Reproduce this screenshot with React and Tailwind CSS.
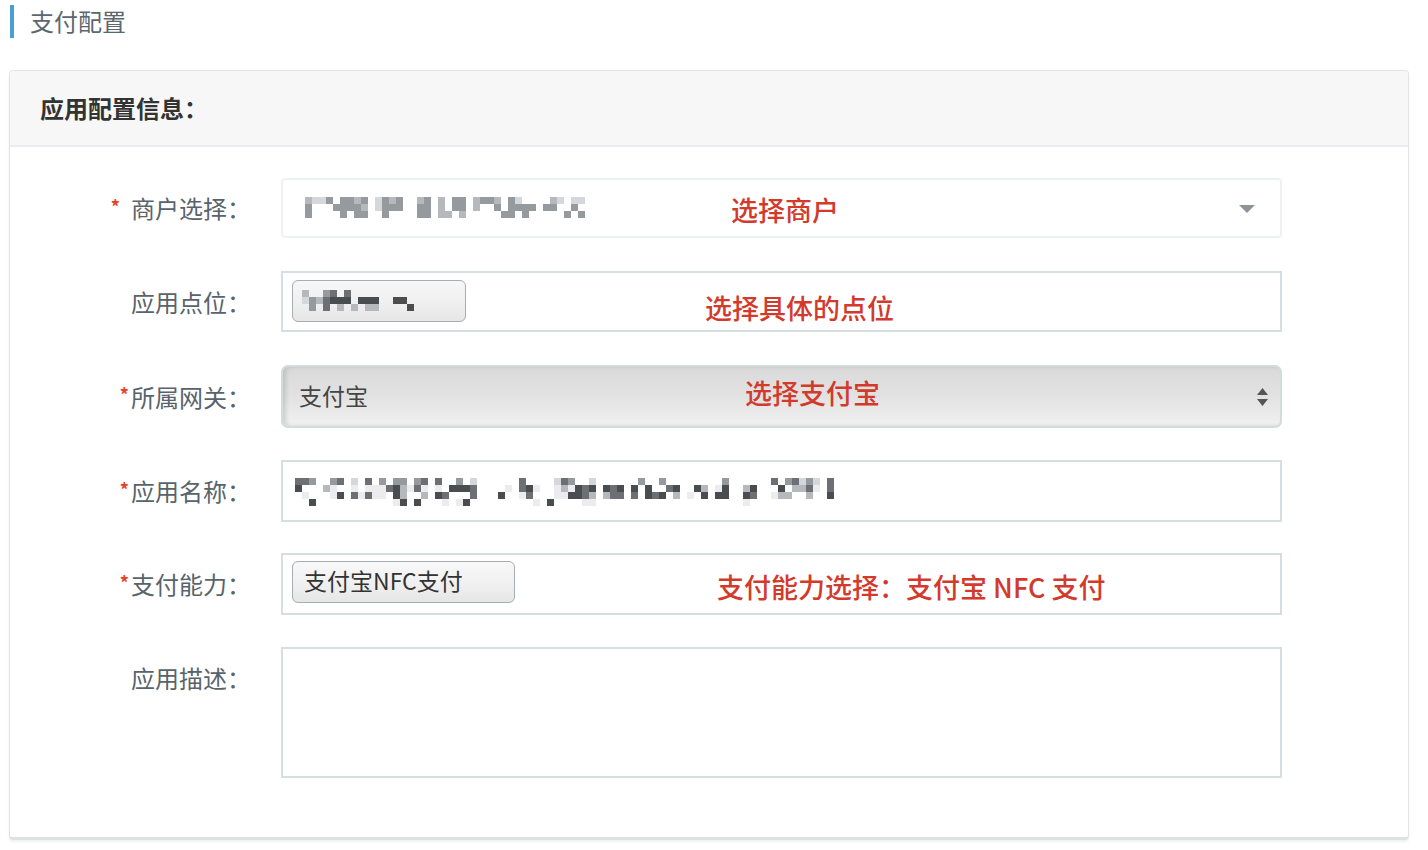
import React from 'react';

const PALETTE = {
  '1': '#ececee',
  '2': '#d5d8da',
  '3': '#b5b9bd',
  '4': '#959a9f',
  '5': '#6c7074',
  '6': '#4a4d50',
};

// pixelated (blurred) text, drawn as blocks
const Mosaic = ({ rows, size = 7 }) => {
  const cols = Math.max(...rows.map((r) => r.length));
  return (
    <svg width={cols * size} height={rows.length * size} className="block shrink-0">
      {rows.map((row, y) =>
        row.split('').map((c, x) =>
          PALETTE[c] ? (
            <rect key={`${x}-${y}`} x={x * size} y={y * size} width={size} height={size} fill={PALETTE[c]} />
          ) : null
        )
      )}
    </svg>
  );
};

// deterministic fake mosaic for the long app name
const makeRows = (cols, seed) => {
  let s = seed;
  const rnd = () => {
    s = (s * 9301 + 49297) % 233280;
    return s / 233280;
  };
  const rows = ['', '', '', ''];
  for (let x = 0; x < cols; x++) {
    const gap = x % 4 === 3 && rnd() < 0.6;
    for (let y = 0; y < 4; y++) {
      if (gap) {
        rows[y] += '.';
        continue;
      }
      const r = rnd();
      if (y === 3) rows[y] += r < 0.75 ? '.' : r < 0.9 ? '1' : '6';
      else if (y === 0) rows[y] += r < 0.45 ? '.' : r < 0.6 ? '2' : r < 0.8 ? '4' : '5';
      else rows[y] += r < 0.3 ? '.' : r < 0.45 ? '1' : r < 0.6 ? '3' : r < 0.8 ? '5' : '6';
    }
  }
  return rows;
};

const merchantRows = [
  '3224.4434.2434..34.3.44.3443.42....32.22',
  '4...44443.2444..44.3.44.3..4.4444.44..4.',
  '4....4.44..4....44.33.3.....44.4.....4.4',
];

const pointRows = [
  '3..45.5..........',
  '2435666.6668.668.',
  '.4.5.3.3.33....6.',
];

const nameRows = makeRows(77, 17);

const Label = ({ required, tight, children, className = '' }) => (
  <div className={`w-[241px] shrink-0 flex items-center justify-end text-[24px] text-[#58636b] ${className}`}>
    {required && (
      <span className={`text-[18px] font-bold text-[#e8412c] ${tight ? 'mr-[2px]' : 'mr-[11px]'} -mt-[4px]`}>*</span>
    )}
    <span>{children}</span>
  </div>
);

const Note = ({ className = '', children }) => (
  <span className={`absolute top-1/2 -translate-y-1/2 text-[27px] font-medium text-[#d23a2c] whitespace-nowrap ${className}`}>
    {children}
  </span>
);

const App = () => {
  return (
    <div
      className="min-h-[850px] bg-white pl-[9px] pr-[19px]"
      style={{ fontFamily: '"Noto Sans CJK SC", "Noto Sans", sans-serif' }}
    >
      {/* page title */}
      <div className="h-[70px] pt-[5px]">
        <div className="flex items-center h-[33px]">
          <div className="w-[4px] h-[33px] bg-[#4a9fd2] ml-[1px]" />
          <span className="ml-[16px] text-[24px] text-[#5c666e] -mt-[2px]">支付配置</span>
        </div>
      </div>

      {/* card */}
      <div className="border border-[#e1e5e7] border-b-[3px] border-b-[#dde2e4] rounded-[4px] shadow-[0_2px_3px_rgba(0,0,0,0.06)] overflow-hidden">
        <div className="h-[76px] bg-[#f7f7f7] border-b-2 border-[#eaedef] flex items-center pl-[30px]">
          <span className="text-[24px] font-bold text-[#333]">应用配置信息：</span>
        </div>

        <div className="pt-[31px] pb-[59px] flex flex-col">
          {/* 商户选择 */}
          <div className="flex h-[60px]">
            <Label required>商户选择：</Label>
            <div className="ml-[30px] w-[1001px] h-full relative border-2 border-[#eef1f2] rounded-[4px] bg-white flex items-center pl-[22px]">
              <div className="-mt-[2px]">
                <Mosaic rows={merchantRows} />
              </div>
              <Note className="left-[448px] mt-[2px]">选择商户</Note>
              <svg className="absolute right-[25px] top-[25px]" width="16" height="8" viewBox="0 0 16 8">
                <path d="M0 0 H16 L8 8 Z" fill="#8e9399" />
              </svg>
            </div>
          </div>

          {/* 应用点位 */}
          <div className="flex h-[61px] mt-[33px]">
            <Label>应用点位：</Label>
            <div className="ml-[30px] w-[1001px] h-full relative border-2 border-[#d5dfe1] bg-white flex items-center pl-[9px]">
              <div className="w-[174px] h-[42px] rounded-[6px] border-[1.5px] border-[#a8adb1] bg-gradient-to-b from-[#f7f7f7] via-[#f0f0f0] to-[#e6e6e6] flex items-center pl-[9px] -mt-[2px]">
                <Mosaic rows={pointRows} />
              </div>
              <Note className="left-[422px] mt-[6px]">选择具体的点位</Note>
            </div>
          </div>

          {/* 所属网关 */}
          <div className="flex h-[63px] mt-[33px]">
            <Label required tight>所属网关：</Label>
            <div className="ml-[30px] w-[1001px] h-full relative border-2 border-[#d3dbdd] rounded-[7px] bg-gradient-to-b from-[#dadada] via-[#e2e2e2] to-[#f1f1f1] shadow-[inset_3px_0_4px_rgba(0,0,0,0.12)] flex items-center pl-[16px]">
              <span className="text-[23px] text-[#444] -mt-[3px]">支付宝</span>
              <Note className="left-[462px] -mt-[4px]">选择支付宝</Note>
              <svg className="absolute right-[12px] top-[21px]" width="11" height="19" viewBox="0 0 11 19">
                <path d="M5.5 0 L11 7 H0 Z" fill="#555" />
                <path d="M0 11 H11 L5.5 18 Z" fill="#555" />
              </svg>
            </div>
          </div>

          {/* 应用名称 */}
          <div className="flex h-[62px] mt-[32px]">
            <Label required tight>应用名称：</Label>
            <div className="ml-[30px] w-[1001px] h-full border-2 border-[#d5dfe1] bg-white flex items-center pl-[12px]">
              <div className="mt-[2px]">
                <Mosaic rows={nameRows} />
              </div>
            </div>
          </div>

          {/* 支付能力 */}
          <div className="flex h-[62px] mt-[31px]">
            <Label required tight>支付能力：</Label>
            <div className="ml-[30px] w-[1001px] h-full relative border-2 border-[#d5dfe1] bg-white flex items-center pl-[9px]">
              <div className="w-[223px] h-[42px] rounded-[6px] border-[1.5px] border-[#a8adb1] bg-gradient-to-b from-[#f8f8f8] via-[#f1f1f1] to-[#e6e6e6] flex items-center pl-[11px] -mt-[4px]">
                <span className="text-[23px] text-[#333] -mt-[3px]">支付宝NFC支付</span>
              </div>
              <Note className="left-[434px] mt-[3px]">支付能力选择：支付宝 NFC 支付</Note>
            </div>
          </div>

          {/* 应用描述 */}
          <div className="flex h-[131px] mt-[32px]">
            <Label className="self-start h-[61px]">应用描述：</Label>
            <div className="ml-[30px] w-[1001px] h-full border-2 border-[#d5dfe1] bg-white" />
          </div>
        </div>
      </div>
    </div>
  );
};

export default App;
